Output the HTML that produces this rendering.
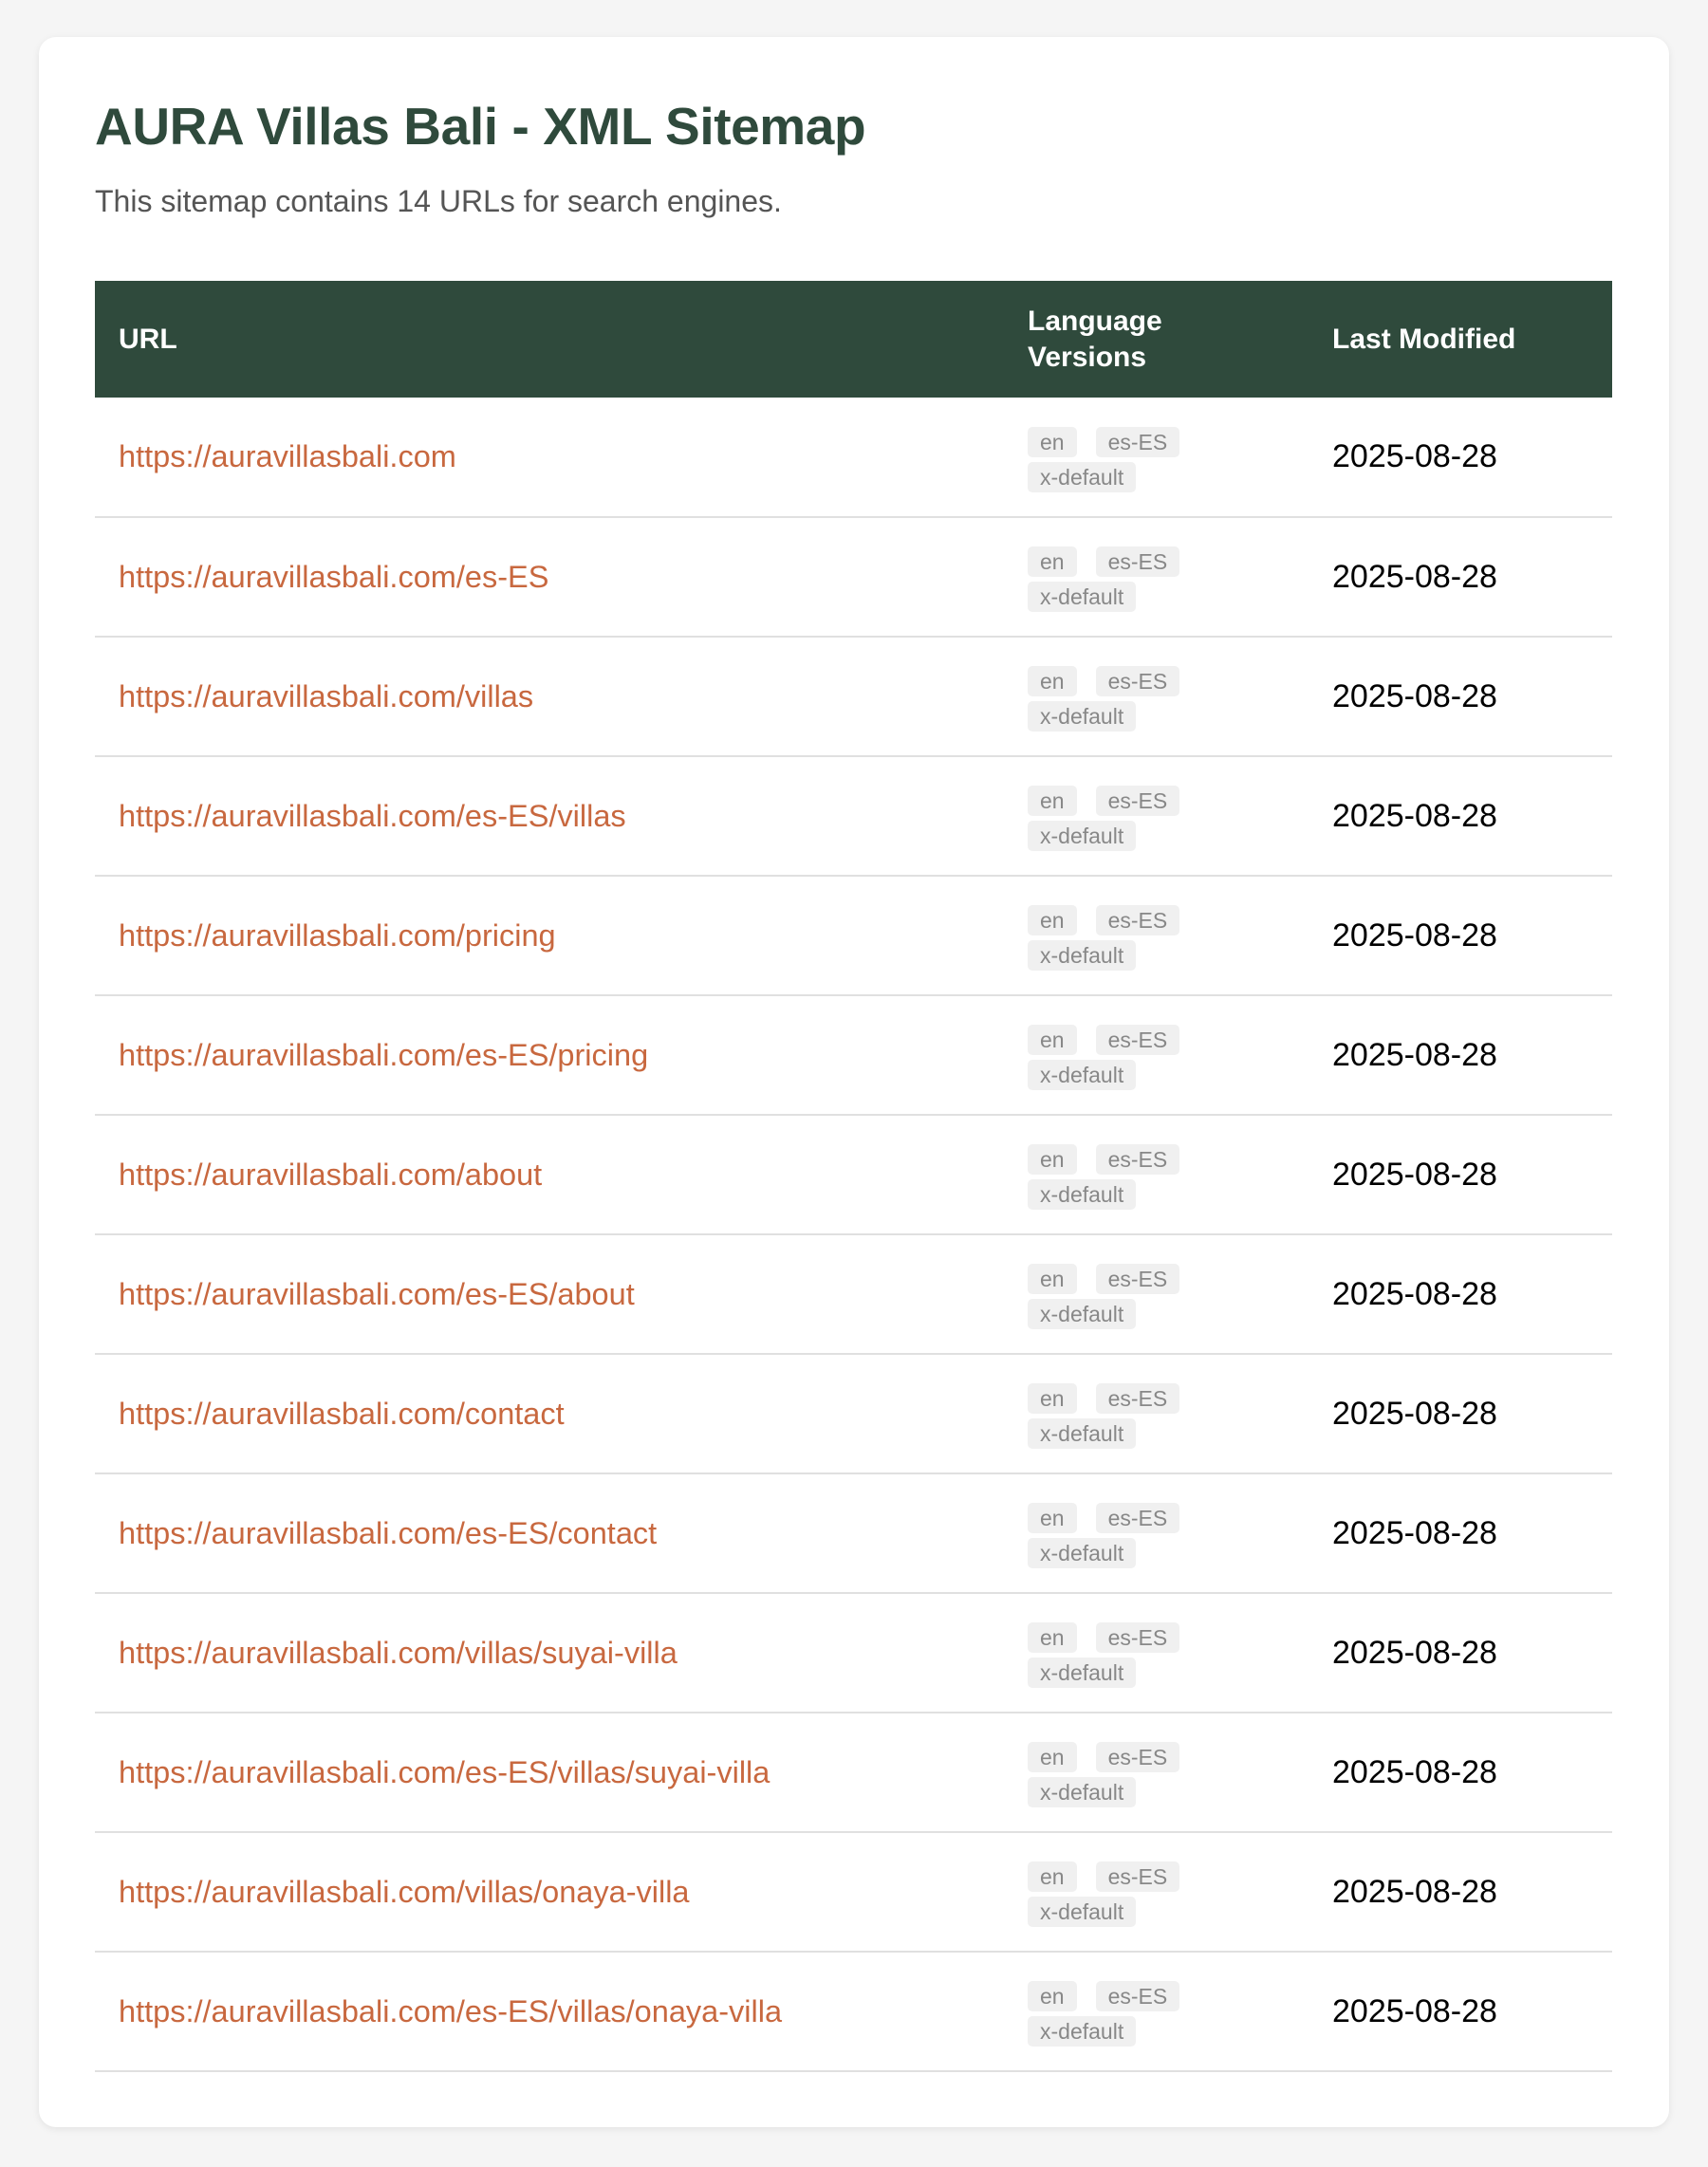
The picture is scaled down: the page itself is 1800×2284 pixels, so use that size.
<!DOCTYPE html>
<html><head><meta charset="utf-8"><style>
*{box-sizing:border-box;margin:0;padding:0}
body{width:1800px;height:2284px;background:#f5f5f5;font-family:"Liberation Sans",sans-serif;overflow:hidden}
.card{position:absolute;left:41px;top:39px;width:1718px;height:2203px;background:#fff;border-radius:18px;box-shadow:0 2px 8px rgba(0,0,0,.08)}
h1{position:absolute;left:59px;top:62px;font-size:55px;font-weight:bold;color:#2f4a3c;letter-spacing:-0.4px}
p.sub{position:absolute;left:59px;top:155px;font-size:32px;color:#555}
table{position:absolute;left:59px;top:257px;width:1599px;border-collapse:collapse;table-layout:fixed}
th{background:#2f4a3c;color:#fff;text-align:left;font-size:30px;font-weight:bold;height:123px;padding:0 25px;line-height:38px}
td{height:126px;border-bottom:2px solid #e0e0e0;padding:0 25px;font-size:32.5px;vertical-align:middle}
td.u{color:#c8683f}
td.d{color:#000;font-size:34px}
.b{display:inline-block;background:#f0f0f0;color:#888;font-size:23px;height:32px;line-height:32px;padding:0 13px;border-radius:5px;margin-right:20px}
.b+.x{margin-top:2px}
</style></head><body><div class="card">
<h1>AURA Villas Bali - XML Sitemap</h1>
<p class="sub">This sitemap contains 14 URLs for search engines.</p>
<table>
<colgroup><col style="width:958px"><col style="width:321px"><col></colgroup>
<tr><th>URL</th><th>Language<br>Versions</th><th>Last Modified</th></tr>
<tr><td class="u">https://auravillasbali.com</td><td><span class="b">en</span><span class="b">es-ES</span><br><span class="b x">x-default</span></td><td class="d">2025-08-28</td></tr>
<tr><td class="u">https://auravillasbali.com/es-ES</td><td><span class="b">en</span><span class="b">es-ES</span><br><span class="b x">x-default</span></td><td class="d">2025-08-28</td></tr>
<tr><td class="u">https://auravillasbali.com/villas</td><td><span class="b">en</span><span class="b">es-ES</span><br><span class="b x">x-default</span></td><td class="d">2025-08-28</td></tr>
<tr><td class="u">https://auravillasbali.com/es-ES/villas</td><td><span class="b">en</span><span class="b">es-ES</span><br><span class="b x">x-default</span></td><td class="d">2025-08-28</td></tr>
<tr><td class="u">https://auravillasbali.com/pricing</td><td><span class="b">en</span><span class="b">es-ES</span><br><span class="b x">x-default</span></td><td class="d">2025-08-28</td></tr>
<tr><td class="u">https://auravillasbali.com/es-ES/pricing</td><td><span class="b">en</span><span class="b">es-ES</span><br><span class="b x">x-default</span></td><td class="d">2025-08-28</td></tr>
<tr><td class="u">https://auravillasbali.com/about</td><td><span class="b">en</span><span class="b">es-ES</span><br><span class="b x">x-default</span></td><td class="d">2025-08-28</td></tr>
<tr><td class="u">https://auravillasbali.com/es-ES/about</td><td><span class="b">en</span><span class="b">es-ES</span><br><span class="b x">x-default</span></td><td class="d">2025-08-28</td></tr>
<tr><td class="u">https://auravillasbali.com/contact</td><td><span class="b">en</span><span class="b">es-ES</span><br><span class="b x">x-default</span></td><td class="d">2025-08-28</td></tr>
<tr><td class="u">https://auravillasbali.com/es-ES/contact</td><td><span class="b">en</span><span class="b">es-ES</span><br><span class="b x">x-default</span></td><td class="d">2025-08-28</td></tr>
<tr><td class="u">https://auravillasbali.com/villas/suyai-villa</td><td><span class="b">en</span><span class="b">es-ES</span><br><span class="b x">x-default</span></td><td class="d">2025-08-28</td></tr>
<tr><td class="u">https://auravillasbali.com/es-ES/villas/suyai-villa</td><td><span class="b">en</span><span class="b">es-ES</span><br><span class="b x">x-default</span></td><td class="d">2025-08-28</td></tr>
<tr><td class="u">https://auravillasbali.com/villas/onaya-villa</td><td><span class="b">en</span><span class="b">es-ES</span><br><span class="b x">x-default</span></td><td class="d">2025-08-28</td></tr>
<tr><td class="u">https://auravillasbali.com/es-ES/villas/onaya-villa</td><td><span class="b">en</span><span class="b">es-ES</span><br><span class="b x">x-default</span></td><td class="d">2025-08-28</td></tr>
</table>
</div></body></html>
